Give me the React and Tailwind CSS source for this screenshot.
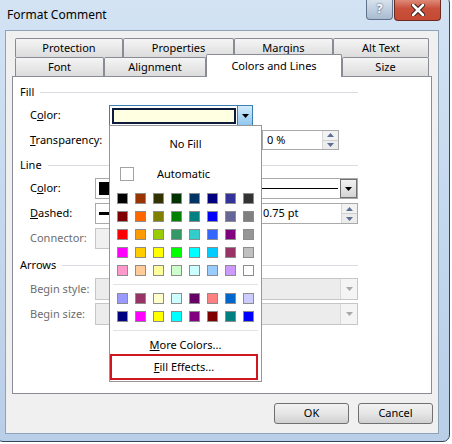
import React from 'react';

const standardColors = [
  ['#000000', '#993300', '#333300', '#003300', '#003366', '#000080', '#333399', '#333333'],
  ['#800000', '#ff6600', '#808000', '#008000', '#008080', '#0000ff', '#666699', '#808080'],
  ['#ff0000', '#ff9900', '#99cc00', '#339966', '#33cccc', '#3366ff', '#800080', '#969696'],
  ['#ff00ff', '#ffcc00', '#ffff00', '#00ff00', '#00ffff', '#00ccff', '#993366', '#c0c0c0'],
  ['#ff99cc', '#ffcc99', '#ffff99', '#ccffcc', '#ccffff', '#99ccff', '#cc99ff', '#ffffff'],
];

const chartColors = [
  ['#9999ff', '#993366', '#ffffcc', '#ccffff', '#660066', '#ff8080', '#0066cc', '#ccccff'],
  ['#000080', '#ff00ff', '#ffff00', '#00ffff', '#800080', '#800000', '#008080', '#0000ff'],
];

function Tri({ className = 'fill-black' }) {
  return (
    <svg width="7" height="4" viewBox="0 0 7 4" className={className}>
      <path d="M0 0h7L3.5 4z" />
    </svg>
  );
}

function Spin() {
  return (
    <div className="w-[16px] h-full flex flex-col border-l border-[#d6d6d6]">
      <div className="flex-1 flex items-center justify-center bg-[#f2f2f2] border-b border-[#d0d0d0]">
        <svg width="7" height="4" viewBox="0 0 7 4" className="fill-[#5a6f91]"><path d="M0 4h7L3.5 0z" /></svg>
      </div>
      <div className="flex-1 flex items-center justify-center bg-[#ececec]">
        <Tri className="fill-[#5a6f91]" />
      </div>
    </div>
  );
}

function ComboArrow({ disabled }) {
  return (
    <div
      className={
        disabled
          ? 'w-[17px] h-full flex items-center justify-center border-l border-[#d9d9d9] bg-[#f4f4f4]'
          : 'w-[17px] h-full flex items-center justify-center border border-[#707070] bg-gradient-to-b from-[#f2f2f2] to-[#d4d4d4]'
      }
    >
      <Tri className={disabled ? 'fill-[#a8a8a8]' : 'fill-black'} />
    </div>
  );
}

function Swatches({ rows }) {
  return (
    <div className="grid grid-cols-[repeat(8,11px)] gap-[7px] pl-[7px]">
      {rows.flat().map((c, i) => (
        <div key={i} className="w-[11px] h-[11px] border border-[#8d8d8d]" style={{ background: c }} />
      ))}
    </div>
  );
}

function Header({ children }) {
  return (
    <div className="flex items-center h-[14px]">
      <span>{children}</span>
      <div className="flex-1 h-px bg-[#d9dde2] ml-[6px]" />
    </div>
  );
}

function Tab({ className, children }) {
  return (
    <div
      className={
        'h-full flex items-center justify-center border border-b-0 border-[#898c95] rounded-t-[2px] bg-gradient-to-b from-[#f5f5f5] to-[#dcdcdc] ' +
        className
      }
    >
      {children}
    </div>
  );
}

export default function App() {
  return (
    <div className="w-[452px] h-[444px] bg-white overflow-hidden text-[11px] text-black font-[family-name:'Noto_Sans',sans-serif]">
      <div className="-ml-[4px] -mt-[4px] w-[454px] h-[446px] rounded-[7px] border border-[#34475f] bg-gradient-to-b from-[#d3e3f4] via-[#c4d8ee] to-[#b9cfe7] flex flex-col">
        {/* title bar */}
        <div className="h-[33px] flex justify-between items-start">
          <div className="pl-[10px] pt-[11px] text-[12px] leading-[14px]">Format Comment</div>
          <div className="flex gap-[1px] pr-[8px]">
            <div className="w-[27px] h-[23px] rounded-b-[4px] border border-t-0 border-[#5f738d] bg-gradient-to-b from-[#dfe8f2] to-[#a9bbd0] flex items-end justify-center pb-[3px] text-white font-bold text-[12px] leading-[14px] [text-shadow:0_0_2px_#1c2c44]">
              ?
            </div>
            <div className="w-[47px] h-[24px] rounded-b-[4px] border border-t-0 border-[#6a2a22] bg-gradient-to-b from-[#e39c8d] via-[#c9503c] to-[#c44a32] flex items-end justify-center pb-[4px]">
              <svg width="14" height="12" viewBox="0 0 14 12">
                <path d="M2 1l10 10M12 1L2 11" stroke="#2d1410" strokeWidth="4.5" strokeLinecap="round" />
                <path d="M2 1l10 10M12 1L2 11" stroke="#ffffff" strokeWidth="2.6" strokeLinecap="round" />
              </svg>
            </div>
          </div>
        </div>

        {/* client area */}
        <div className="ml-[8px] w-[434px] h-[404px] bg-[#f0f0f0] border border-[#8ea2ba] flex flex-col">
          {/* tabs */}
          <div className="mt-[7px] ml-[9px] flex flex-col">
            <div className="flex h-[19px]">
              <Tab className="w-[108px]">Protection</Tab>
              <Tab className="w-[111px]">Properties</Tab>
              <Tab className="w-[99px]">Margins</Tab>
              <Tab className="w-[96px]">Alt Text</Tab>
            </div>
            <div className="flex items-end h-[19px]">
              <Tab className="w-[89px]">Font</Tab>
              <Tab className="w-[102px]">Alignment</Tab>
              <div className="relative z-10 w-[136px] h-[23px] -mb-px flex items-start justify-center pt-[3px] border border-b-0 border-[#898c95] rounded-t-[2px] bg-white">
                Colors and Lines
              </div>
              <Tab className="w-[87px]">Size</Tab>
            </div>
          </div>

          {/* panel */}
          <div className="relative ml-[6px] w-[420px] h-[318px] border border-[#898c95] bg-white">
            <div className="ml-[7px] w-[338px] flex flex-col">
              <div className="mt-[8px]">
                <Header>Fill</Header>
              </div>
              <div className="mt-[6px] h-[21px] flex items-center">
                <span className="pl-[10px] w-[89px]">
                  C<u>o</u>lor:
                </span>
                <div className="w-[144px] h-[21px] border border-[#3c7fb1] flex items-center pl-[2px] bg-white">
                  <div className="w-[124px] h-[16px] border-2 border-[#0d1b3c] bg-[#ffffe1]" />
                  <div className="ml-[1px] flex-1 h-full flex items-center justify-center bg-gradient-to-b from-[#d3ecfb] to-[#8fc7ef] border-l border-[#3c7fb1]">
                    <Tri />
                  </div>
                </div>
              </div>
              <div className="mt-[4px] h-[20px] flex items-center">
                <span className="pl-[10px] w-[89px]">
                  <u>T</u>ransparency:
                </span>
                <div className="w-[144px] h-full" />
                <div className="ml-[9px] w-[77px] h-full border border-[#a9a9a9] flex items-center">
                  <span className="flex-1 pl-[4px]">0 %</span>
                  <Spin />
                </div>
              </div>

              <div className="mt-[8px]">
                <Header>Line</Header>
              </div>
              <div className="mt-[6px] h-[21px] flex items-center">
                <span className="pl-[10px] w-[75px]">
                  C<u>o</u>lor:
                </span>
                <div className="w-[60px] h-full border border-[#a9a9a9] flex items-center pl-[3px]">
                  <div className="w-[40px] h-[13px] bg-black" />
                </div>
                <div className="ml-auto w-[160px] h-full border border-[#a9a9a9] flex items-center pl-[3px]">
                  <div className="flex-1 h-px bg-black mr-[2px]" />
                  <ComboArrow />
                </div>
              </div>
              <div className="mt-[4px] h-[21px] flex items-center">
                <span className="pl-[10px] w-[75px]">
                  <u>D</u>ashed:
                </span>
                <div className="w-[80px] h-full border border-[#a9a9a9] flex items-center pl-[3px]">
                  <div className="w-[60px] h-[3px] bg-black" />
                </div>
                <div className="ml-auto w-[98px] h-full border border-[#a9a9a9] flex items-center">
                  <span className="flex-1 pl-[2px]">0.75 pt</span>
                  <Spin />
                </div>
              </div>
              <div className="mt-[4px] h-[21px] flex items-center text-[#6d6d6d]">
                <span className="pl-[10px] w-[75px]">Connector:</span>
                <div className="w-[80px] h-full border border-[#c6c6c6] bg-[#f0f0f0]" />
              </div>

              <div className="mt-[9px]">
                <Header>Arrows</Header>
              </div>
              <div className="mt-[6px] h-[22px] flex items-center text-[#6d6d6d]">
                <span className="pl-[10px] w-[75px]">Begin style:</span>
                <div className="w-[263px] h-full border border-[#c6c6c6] bg-[#ececec] flex justify-end">
                  <ComboArrow disabled />
                </div>
              </div>
              <div className="mt-[3px] h-[22px] flex items-center text-[#6d6d6d]">
                <span className="pl-[10px] w-[75px]">Begin size:</span>
                <div className="w-[263px] h-full border border-[#c6c6c6] bg-[#ececec] flex justify-end">
                  <ComboArrow disabled />
                </div>
              </div>
            </div>

            {/* colour dropdown */}
            <div className="absolute left-[96px] top-[48px] z-20 w-[153px] h-[257px] border border-[#979797] bg-white flex flex-col">
              <div className="mt-[8px] h-[20px] flex items-center justify-center">No Fill</div>
              <div className="mt-[10px] h-[20px] flex items-center">
                <div className="ml-[10px] w-[14px] h-[14px] border border-[#a3a3a3]" />
                <span className="ml-[23px]">Automatic</span>
              </div>
              <div className="mt-[9px]">
                <Swatches rows={standardColors} />
              </div>
              <div className="mt-[8px] mx-[3px] h-px bg-[#e3e3e3]" />
              <div className="mt-[8px]">
                <Swatches rows={chartColors} />
              </div>
              <div className="mt-[8px] mx-[3px] h-px bg-[#e3e3e3]" />
              <div className="mt-[5px] h-[18px] flex items-center justify-center">
                <span>
                  <u>M</u>ore Colors...
                </span>
              </div>
              <div className="w-[148px] h-[26px] border-2 border-[#d0161e] flex items-center justify-center">
                <span>
                  <u>F</u>ill Effects...
                </span>
              </div>
            </div>
          </div>

          {/* buttons */}
          <div className="mt-[9px] flex justify-end gap-[9px] pr-[5px]">
            <div className="w-[75px] h-[21px] rounded-[3px] border border-[#707070] bg-gradient-to-b from-[#f2f2f2] via-[#e6e6e6] to-[#d0d0d0] flex items-center justify-center">
              OK
            </div>
            <div className="w-[75px] h-[21px] rounded-[3px] border border-[#707070] bg-gradient-to-b from-[#f2f2f2] via-[#e6e6e6] to-[#d0d0d0] flex items-center justify-center">
              Cancel
            </div>
          </div>
        </div>
      </div>
    </div>
  );
}
